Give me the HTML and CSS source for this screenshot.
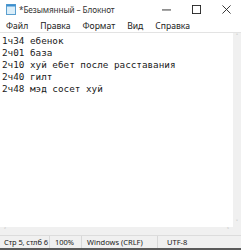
FILE: index.html
```html
<!DOCTYPE html>
<html lang="ru">
<head>
    <meta charset="UTF-8">
    <title>*Безымянный – Блокнот</title>
    <link rel="stylesheet" href="styles.css">
</head>
<body>
<div class="window">
    <div class="titlebar">
        <svg class="app-icon" width="10" height="11" viewBox="0 0 10 11">
            <rect x="0.5" y="0.5" width="9" height="10" fill="#dbeef9" stroke="#5b9fcf"/>
            <rect x="0.5" y="0.5" width="9" height="2" fill="#3c8fd0"/>
        </svg>
        <span class="title">*Безымянный – Блокнот</span>
        <div class="controls">
            <span class="ctl">
                <svg width="10" height="10" viewBox="0 0 10 10"><path d="M0 5.5h10" stroke="#222" stroke-width="1"/></svg>
            </span>
            <span class="ctl">
                <svg width="10" height="10" viewBox="0 0 10 10"><rect x="0.5" y="0.5" width="9" height="9" fill="none" stroke="#222"/></svg>
            </span>
            <span class="ctl">
                <svg width="10" height="10" viewBox="0 0 10 10"><path d="M0.5 0.5l9 9M9.5 0.5l-9 9" stroke="#222" stroke-width="1"/></svg>
            </span>
        </div>
    </div>

    <div class="menubar">
        <span class="menu-item">Файл</span>
        <span class="menu-item">Правка</span>
        <span class="menu-item">Формат</span>
        <span class="menu-item">Вид</span>
        <span class="menu-item">Справка</span>
    </div>

    <div class="editor">
        <div class="editor-main">
            <pre class="text">1ч34 ебенок
2ч01 база
2ч10 хуй ебет после расставания
2ч40 гилт
2ч48 мэд сосет хуй</pre>
            <div class="vscroll">
                <span class="arrow">&#708;</span>
                <span class="arrow">&#709;</span>
            </div>
        </div>
        <div class="hscroll">
            <span class="arrow">&#706;</span>
            <span class="arrow">&#707;</span>
        </div>
    </div>

    <div class="statusbar">
        <span class="cell cell-pos">Стр 5, стлб 6</span>
        <span class="cell cell-zoom">100%</span>
        <span class="cell cell-eol">Windows (CRLF)</span>
        <span class="cell cell-enc">UTF-8</span>
    </div>
</div>
</body>
</html>
```

FILE: styles.css
```css
html, body {
    margin: 0;
    padding: 0;
    background: #fff;
}

.window {
    width: 241px;
    height: 250px;
    display: flex;
    flex-direction: column;
    font-family: "Noto Sans", "DejaVu Sans", sans-serif;
    color: #1a1a1a;
    overflow: hidden;
    box-sizing: border-box;
    border-bottom: 2px solid #5a5a5a;
}

.titlebar {
    height: 19px;
    display: flex;
    align-items: center;
    padding-left: 6px;
    flex-shrink: 0;
}

.app-icon {
    margin-right: 3px;
}

.title {
    font-size: 8.2px;
    color: #333;
    letter-spacing: -0.1px;
}

.controls {
    margin-left: auto;
    display: flex;
    align-items: center;
}

.ctl {
    width: 30px;
    display: flex;
    justify-content: center;
    align-items: center;
}

.ctl svg {
    width: 9px;
    height: 9px;
}

.menubar {
    height: 13px;
    display: flex;
    align-items: center;
    padding-left: 6px;
    gap: 12px;
    font-size: 8.6px;
    color: #222;
    flex-shrink: 0;
}

.editor {
    flex: 1;
    display: flex;
    flex-direction: column;
    border-top: 1px solid #e3e3e3;
    min-height: 0;
}

.editor-main {
    flex: 1;
    display: flex;
    min-height: 0;
}

.text {
    flex: 1;
    margin: 0;
    padding: 2px 0 0 2px;
    font-family: "DejaVu Sans Mono", "Liberation Mono", monospace;
    font-size: 9.3px;
    line-height: 12px;
    color: #1a1a1a;
}

.vscroll {
    width: 8px;
    background: #f0f0f0;
    display: flex;
    flex-direction: column;
    justify-content: space-between;
    align-items: center;
}

.hscroll {
    height: 8px;
    background: #f0f0f0;
    display: flex;
    justify-content: space-between;
    align-items: center;
    padding: 0 12px 0 4px;
}

.arrow {
    font-size: 7px;
    line-height: 8px;
    color: #a8a8a8;
}

.statusbar {
    height: 12px;
    display: flex;
    align-items: center;
    background: #f0f0f0;
    border-top: 1px solid #dcdcdc;
    font-size: 7.5px;
    color: #222;
    flex-shrink: 0;
}

.cell {
    height: 100%;
    display: flex;
    align-items: center;
    box-sizing: border-box;
    padding-left: 5px;
    border-right: 1px solid #d8d8d8;
    white-space: nowrap;
}

.cell-pos { width: 50px; padding-left: 4px; letter-spacing: -0.1px; }
.cell-zoom { width: 32px; }
.cell-eol { width: 76px; }
.cell-enc { border-right: none; padding-left: 9px; }
```
